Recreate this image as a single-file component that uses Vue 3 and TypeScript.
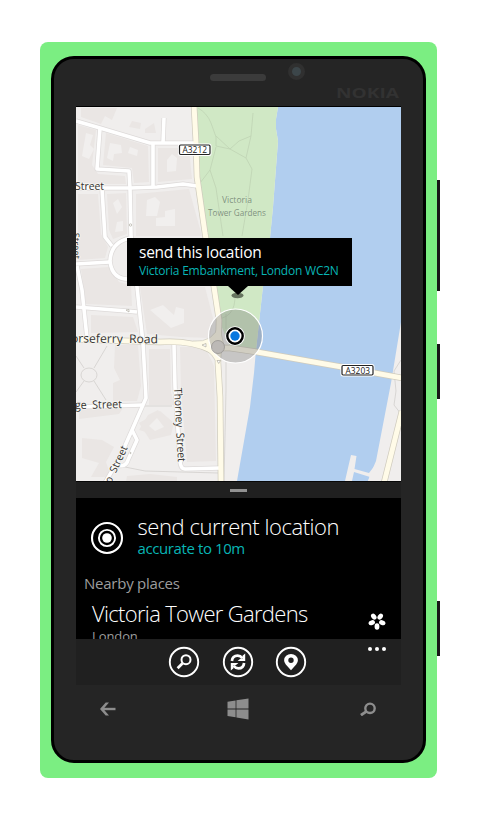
<script setup lang="ts">
interface MapLabel {
  text: string
  x: number
  y: number
  width: number
  size: number
  angle?: number
  park?: boolean
}

const streets: string[] = [
  'M76 121L100 128L150 143H195',
  'M100 128L97 169L129 171L130 188L131 235L137 287L143 343L146 398L132 430L120 457L105 483',
  'M153 143V187',
  'M164 118L163 143',
  'M76 188H130L157 187L183 184L197 186',
  'M102 189L105 237L112 246',
  'M130 238Q111 242 110 261Q112 281 132 279',
  'M76 264L110 262',
  'M77 266L82 290L87 338',
  'M76 307L127 311L137 312',
  'M174 345L175 387L180 459Q180 469 185 469L220 468',
  'M76 407L143 405',
  'M132 430L137 440L128 460Q126 468 115 465',
]

const mainRoads: string[] = [
  'M194 105L196 143L197 177L205 233L214 287L219 320L218 363L220 397L221 483',
  'M70 339L160 342Q190 340 211 350',
  'M218 348H230L257 352L342 367L402 378',
  'M402 411L384 483',
]

const blocks: string[] = [
  'M81 108H117L112 120L105 116L101 124L81 117Z',
  'M78 125L96 130L92 165L98 174L125 176L126 184L78 184Z',
  'M106 133L148 146L149 182L134 183L132 168L103 165Z',
  'M132 121L141 123L140 129L129 127Z',
  'M145 129L154 123L156 133L145 133Z',
  'M158 148H189L192 179L158 182Z',
  'M136 194L189 189L202 236H136Z',
  'M78 194H98L101 234L108 247L105 258L78 260Z',
  'M107 194L126 193L127 234L113 239L109 230Z',
  'M81 269L109 267L119 282L131 285L132 306L86 304Z',
  'M140 287H205L213 318L210 338L181 337L147 334Z',
  'M91 315L133 317L138 332L91 333Z',
  'M115 345H138L141 386L137 401H113V383L120 380L114 368Z',
  'M149 349H170L171 392L174 405H149Z',
  'M180 347H205L214 366L216 461L187 462L181 391Z',
  'M139 423L160 411L174 423L171 435L150 440Z',
  'M82 438L102 440L114 447L106 462L111 477H91L99 463L82 458Z',
  'M148 415L158 410L170 426L159 436L139 430Z',
  'M127 476L150 474L177 477V482H126Z',
  'M79 409L123 408L119 414L79 419Z',
]

const courtyards: string[] = [
  'M86 133L93 135L90 145L94 149L89 159L82 156Z',
  'M110 143L121 145L122 153L114 154L113 161L107 158Z',
  'M130 147L138 150L137 156L128 153Z',
  'M167 160L172 154L177 158L176 171L167 172Z',
  'M147 200L155 197L160 202L157 216H146Z',
  'M165 211L175 209L175 226H156V218L165 217Z',
  'M113 203L118 199L122 207L117 214Z',
  'M117 222L123 221L123 231L115 232Z',
  'M150 310L163 305L174 315L176 307L184 309V323L171 328Z',
  'M149 426L157 418L164 427L155 431Z',
]

const mapLabels: MapLabel[] = [
  { text: 'Street', x: 75, y: 190, width: 29, size: 11.5 },
  { text: 'Victoria', x: 222, y: 203, width: 30, size: 8.5, park: true },
  { text: 'Tower Gardens', x: 208, y: 215.5, width: 58, size: 8.5, park: true },
  { text: 'orseferry  Road', x: 71, y: 342.5, width: 87, size: 12, angle: 0.5 },
  { text: 'ge  Street', x: 75, y: 409, width: 47, size: 11.5, angle: -1 },
  { text: 'Thorney  Street', x: 174, y: 388, width: 74, size: 11, angle: 87 },
  { text: 'o  Street', x: 111, y: 484, width: 40, size: 10.5, angle: -65 },
  { text: 'Street', x: 72.5, y: 233, width: 26, size: 9.5, angle: 88 },
]

const petals: number[] = [36, 108, 180, 252, 324]
</script>

<template>
  <main class="stage">
    <div class="phone">
      <i class="key volume" /><i class="key power" /><i class="key camera" />
      <section class="glass">
        <header class="top">
          <span class="speaker" />
          <span class="lens" />
          <svg class="brand" viewBox="0 0 66 14"><text x="0" y="12.500" textLength="63" lengthAdjust="spacingAndGlyphs">NOKIA</text></svg>
        </header>

        <div class="screen">
          <div class="map">
            <svg class="map-art" viewBox="76 107 325 374">
              <rect x="76" y="107" width="325" height="374" fill="#f0eeed" />
              <path v-for="d in blocks" :key="d" :d="d" fill="#eae6e4" />
              <path v-for="d in courtyards" :key="d" :d="d" fill="#f1efee" />
              <path d="M278 107L276 119L276 129L278 141L273 207L270 238L263 286L256 350L254 373L250 407L237 481H368L370 475L376 461L391 383L401 322V107Z" fill="#b1ceef" />
              <path d="M196 107H278L276 119L276 129L278 141L273 207L270 238L263 286L256 350L230 347L219 320L207 240L198 180Z" fill="#d0e8c5" />
              <g fill="none" stroke="#bfd3b4" stroke-width=".8">
                <path d="M198 108Q207 113 211 123L216 137L216 146L230 149L239 141L251 136L253 113" />
                <path d="M216 136L230 149L246 158L252 169L248 200L242 236" />
                <path d="M216 147L210 170L200 183M210 170L216 188L223 236" />
                <path d="M234 287Q239 316 218 319M226 314V329M251 136L246 158" />
              </g>
              <g fill="none" stroke="#d2cfcd" stroke-width=".8">
                <ellipse cx="89" cy="375" rx="8" ry="7" fill="#f0eeed" />
                <path d="M107 346L94 368M76 356L84 368M84 381L76 392M94 381L106 400M143 406H172M226 362V390L224 481M125 467L145 471L218 473M401 360L394 371L396 391L394 405L401 414" />
              </g>
              <path d="M351 455L356.500 456L354.500 469L369 473L376 464V481H368L370 477L354 472L352 481H345Z" fill="#f0eeed" />
              <g fill="none" stroke-linejoin="round">
                <path v-for="d in streets" :key="d" :d="d" stroke="#dddad9" stroke-width="5" />
                <path v-for="d in mainRoads" :key="d" :d="d" stroke="#cfcbbd" stroke-width="6.400" />
                <path v-for="d in streets" :key="d" :d="d" stroke="#fff" stroke-width="3.600" />
                <path d="M193 341Q214 343 219 324L224 346Q218 355 219 372Q217 351 193 345Z" fill="#fffbe7" stroke="#cfcbbd" stroke-width=".7" />
                <path v-for="d in mainRoads" :key="d" :d="d" stroke="#fffbe8" stroke-width="5" />
              </g>
              <g fill="#fff" stroke="#a5a196" stroke-width=".6">
                <path d="M202 345L206 343.500V347ZM217 360.500H220.500L218.700 363.500ZM126 310L129 309.500V312Z" />
                <circle cx="130.500" cy="225" r="1.200" /><circle cx="130.500" cy="453" r=".6" />
              </g>
              <text
                v-for="(label, i) in mapLabels"
                :key="i"
                :x="label.x"
                :y="label.y"
                :font-size="label.size"
                :textLength="label.width"
                lengthAdjust="spacingAndGlyphs"
                :transform="`rotate(${label.angle ?? 0} ${label.x} ${label.y})`"
                :class="['street', { park: label.park }]"
              >{{ label.text }}</text>
              <g class="route">
                <rect x="178" y="143.500" width="33.500" height="12.500" rx="2.500" fill="#fff" />
                <rect class="plate" x="179.500" y="145" width="30.500" height="9.500" rx="1.200" />
                <text x="182.500" y="153" textLength="24.500" lengthAdjust="spacingAndGlyphs">A3212</text>
                <rect x="340.500" y="364" width="34" height="12.500" rx="2.500" fill="#fff" />
                <rect class="plate" x="342" y="365.500" width="31" height="9.500" rx="1.200" />
                <text x="345.500" y="373.500" textLength="24.500" lengthAdjust="spacingAndGlyphs">A3203</text>
              </g>
              <ellipse cx="237.500" cy="295.500" rx="6" ry="2.700" fill="#66745f" />
              <circle cx="235.500" cy="336" r="27" fill="#777" fill-opacity=".34" stroke="#fff" stroke-width="1.200" />
              <circle cx="218" cy="347" r="6.500" fill="#bcb9b6" stroke="#969391" stroke-width=".8" />
              <circle cx="235" cy="336" r="9.800" fill="#fff" />
              <circle cx="235" cy="336" r="7.700" fill="#fff" stroke="#000" stroke-width="2.400" />
              <circle cx="235" cy="336" r="4.700" fill="#0878df" />
            </svg>
            <div class="callout">
              <span class="callout-title">send this location</span>
              <span class="callout-place">Victoria Embankment, London WC2N</span>
            </div>
          </div>

          <div class="drag"><span /></div>

          <div class="panel">
            <div class="current">
              <svg class="target" viewBox="0 0 34 34" fill="none" stroke="#fff">
                <circle cx="17" cy="17" r="15" stroke-width="2.100" />
                <circle cx="17" cy="17" r="8.100" stroke-width="1.900" />
                <circle cx="17" cy="17" r="4.800" fill="#fff" stroke="none" />
              </svg>
              <div>
                <h1>send current location</h1>
                <p>accurate to 10m</p>
              </div>
            </div>
            <h2>Nearby places</h2>
            <div class="place">
              <div>
                <h3>Victoria Tower Gardens</h3>
                <small>London</small>
              </div>
              <svg class="flower" viewBox="-9 -9 18 18">
                <ellipse v-for="a in petals" :key="a" cx="0" cy="-5.500" rx="2.400" ry="3.300" fill="#fff" :transform="`rotate(${a})`" />
              </svg>
            </div>
          </div>

          <div class="appbar">
            <svg class="action" viewBox="0 0 32 32" fill="none" stroke="#fff">
              <circle cx="16" cy="16" r="14.200" stroke-width="1.900" />
              <circle cx="18" cy="13.700" r="4.500" stroke-width="2" /><path d="M14.600 17.200L9.600 22.200" stroke-width="2.800" />
            </svg>
            <svg class="action" viewBox="0 0 32 32" fill="none" stroke="#fff">
              <circle cx="16" cy="16" r="14.200" stroke-width="1.900" />
              <path d="M9.900 15Q10.500 9.600 15.600 9.600Q18.500 9.600 20.500 12.200M22.100 17Q21.500 22.400 16.400 22.400Q13.500 22.400 11.500 19.800" stroke-width="2.700" />
              <path d="M23.200 7.600V15.100H15.600L18.300 12.700H20.500V9.800Z M8.800 24.400V16.900H16.400L13.700 19.300H11.500V22.200Z" fill="#fff" stroke="none" />
            </svg>
            <svg class="action" viewBox="0 0 32 32">
              <circle cx="16" cy="16" r="14.200" fill="none" stroke="#fff" stroke-width="1.900" />
              <path fill="#fff" fill-rule="evenodd" d="M16 24.300L10.800 18.400Q9 16.200 9.100 14.200A6.900 6.300 0 0 1 22.900 14.200Q23 16.200 21.200 18.400ZM16 11.500A2.700 2.700 0 1 0 16 16.900A2.700 2.700 0 1 0 16 11.500Z" />
            </svg>
            <span class="more"><i /><i /><i /></span>
          </div>
        </div>

        <nav class="keys">
          <svg width="16" height="14" viewBox="0 0 16 14" fill="none" stroke="#8d8d8d"><path d="M1.500 7H15.500" stroke-width="2.400" /><path d="M9 .6H5.700L0 7L5.700 13.400H9L3.400 7Z" fill="#8d8d8d" stroke="none" /></svg>
          <svg width="22" height="22" viewBox="0 0 22 22" fill="#8d8d8d"><path d="M.5 3.800L8.600 2.500V10.500H.5ZM9.400 2.300L21.500 .6V10.500H9.400ZM.5 11.400H8.600V19.200L.5 18ZM9.400 11.400H21.500V21.400L9.400 19.500Z" /></svg>
          <svg width="16" height="14" viewBox="0 0 16 14" fill="none" stroke="#8d8d8d"><circle cx="10" cy="6.300" r="4.700" stroke-width="2.400" /><path d="M6.500 9.400L.9 13.100" stroke-width="2.900" /></svg>
        </nav>
      </section>
    </div>
  </main>
</template>

<style>
body {
  background: #fff;
}
</style>

<style scoped>
* {
  box-sizing: border-box;
}
.stage {
  width: 480px;
  height: 820px;
  padding: 42px 0 0 40px;
  overflow: hidden;
  background: #fff;
  font-family: "Open Sans", "Noto Sans", sans-serif;
}
.phone {
  position: relative;
  width: 397px;
  height: 736px;
  padding: 14px 0 0 11px;
  border-radius: 8px;
  background: #7bee82;
}
.key {
  position: absolute;
  left: 397px;
  width: 3px;
  background: #191719;
}
.volume {
  top: 138px;
  height: 111px;
}
.power {
  top: 302px;
  height: 55px;
}
.camera {
  top: 559px;
  height: 55px;
}
.glass {
  width: 375px;
  height: 707px;
  padding: 0 22px;
  border: 3px solid #000;
  border-radius: 23px;
  background: #252525;
}
.top {
  display: grid;
  grid-template-columns: 56px 18px 1fr;
  height: 47px;
  padding-left: 134px;
}
.speaker {
  height: 7px;
  margin-top: 15px;
  border-radius: 4px;
  background: #3b3b3b;
}
.lens {
  width: 17px;
  height: 17px;
  margin: 4px 0 0 22px;
  border: 4px solid #303030;
  border-radius: 50%;
  background: #3c464a;
}
.brand {
  width: 66px;
  height: 14px;
  margin: 26px 0 0 52px;
  fill: #323232;
  font: 700 15px "Open Sans", sans-serif;
}
.screen {
  display: flex;
  flex-direction: column;
  width: 325px;
  height: 579px;
  border-top: 1px solid #000;
}
.map {
  position: relative;
  height: 375px;
  border-bottom: 1px solid #080808;
}
.map-art {
  display: block;
  width: 325px;
  height: 374px;
}
.street {
  fill: #35332f;
  stroke: #f8f7f4;
  stroke-width: 1.5px;
  paint-order: stroke;
  white-space: pre;
}
.park {
  fill: #7d917b;
  stroke: #d8edce;
  stroke-width: .7px;
}
.route .plate {
  fill: #fff;
  stroke: #222;
  stroke-width: 1.2px;
}
.route text {
  fill: #222;
  font-size: 8.5px;
}
.callout {
  position: absolute;
  top: 131px;
  left: 51px;
  display: flex;
  flex-direction: column;
  width: 225px;
  height: 48px;
  padding: 4px 12px;
  background: #000;
  white-space: nowrap;
}
.callout::after {
  position: absolute;
  top: 48px;
  left: 101px;
  width: 20px;
  height: 9px;
  background: #000;
  clip-path: polygon(0 0, 100% 0, 50% 100%);
  content: "";
}
.callout-title {
  color: #fff;
  font-size: 15.5px;
  line-height: 21px;
  letter-spacing: -.25px;
}
.callout-place {
  color: #08b5b5;
  font-size: 12px;
  line-height: 15px;
  letter-spacing: -.22px;
}
.drag {
  display: flex;
  align-items: center;
  justify-content: center;
  height: 16px;
  background: #202020;
}
.drag span {
  width: 17px;
  height: 3px;
  background: #929292;
}
.panel {
  height: 141px;
  overflow: hidden;
  background: #000;
  color: #fff;
}
.current {
  display: flex;
  gap: 13.5px;
  height: 74px;
  padding: 14px 0 0 14px;
}
.target {
  width: 34px;
  height: 34px;
  margin-top: 9px;
}
h1,
h2,
h3,
p {
  margin: 0;
  font-weight: 400;
  white-space: nowrap;
}
h1,
h3 {
  font-size: 22px;
  font-weight: 300;
  line-height: 28px;
}
h1 {
  letter-spacing: -.45px;
}
h3 {
  letter-spacing: -.68px;
}
p {
  margin-top: -1px;
  color: #08b5b5;
  font-size: 15px;
  line-height: 18px;
  letter-spacing: -.4px;
}
h2 {
  padding-left: 8px;
  color: #9d9d9d;
  font-size: 15px;
  line-height: 22px;
  letter-spacing: -.24px;
}
.place {
  display: flex;
  justify-content: space-between;
  padding: 5px 15px 0 16px;
}
small {
  display: block;
  color: #9d9d9d;
  font-size: 13px;
  line-height: 18px;
  letter-spacing: -.1px;
}
.flower {
  width: 18px;
  height: 18px;
  margin-top: 13px;
}
.appbar {
  display: flex;
  gap: 21.3px;
  height: 46px;
  padding: 7px 0 0 92.3px;
  background: #202020;
}
.action {
  width: 32px;
  height: 32px;
}
.more {
  display: flex;
  gap: 3px;
  margin: 1px 0 0 40px;
}
.more i {
  width: 4px;
  height: 4px;
  border-radius: 50%;
  background: #fff;
}
.keys {
  display: flex;
  align-items: center;
  justify-content: space-between;
  height: 48px;
  padding: 0 25px 0 23.5px;
}
</style>
